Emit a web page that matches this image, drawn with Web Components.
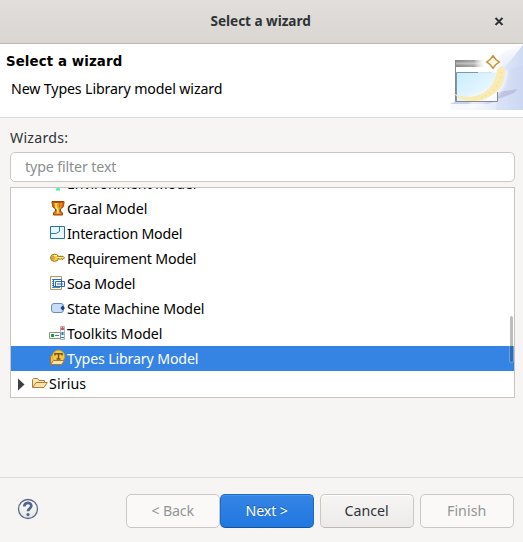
<!DOCTYPE html>
<html lang="en"><head><meta charset="utf-8"><title>Select a wizard</title>
<style>html,body{margin:0;height:100%;overflow:hidden;background:#f6f5f4;font:14.2px/25px "Noto Sans",sans-serif;color:#000}</style></head>
<body><wizard-dialog></wizard-dialog>
<script>
// One-line label whose tracking is adjusted to fill a given width.
class FitText extends HTMLElement{
  connectedCallback(){
    const r=this.attachShadow({mode:'open'});
    r.innerHTML='<style>:host{display:block;flex:none;white-space:pre;text-align:left}span{display:inline-block}</style><span></span>';
    const s=r.querySelector('span'),t=this.getAttribute('text'),w=+this.getAttribute('w');
    s.textContent=t;
    this.style.width=w+'px';
    s.style.letterSpacing=((w+.3-s.getBoundingClientRect().width)/t.length)+'px';
  }
}
class TitleBar extends HTMLElement{
  connectedCallback(){
    this.attachShadow({mode:'open'}).innerHTML=`<style>
    :host{display:grid;grid-template-columns:1fr auto 1fr;align-items:center;height:43px;background:linear-gradient(#e1dedb,#dad6d2);border-bottom:1px solid #bfb8b1;color:#2e3436;font-weight:700;font-size:13.6px}
    fit-text{grid-column:2;position:relative;left:-1px;top:-1px}svg{justify-self:end;margin-right:19px}</style>
    <fit-text text="Select a wizard" w="100"></fit-text>
    <svg width="10" height="10" viewBox="0 0 10 10"><path d="M1.500 2.200 8.500 9.200M8.500 2.200 1.500 9.200" stroke="#fff" stroke-width="2" opacity=".6"/><path d="M1.500 1 8.500 8M8.500 1 1.500 8" stroke="#2e3436" stroke-width="2.100"/></svg>`;
  }
}
class WizardBanner extends HTMLElement{
  connectedCallback(){
    this.attachShadow({mode:'open'}).innerHTML=`<style>
    :host{display:flex;justify-content:space-between;height:73px;background:#fff;border-bottom:1px solid #d9d9d8}
    .t{padding:5px 0 0 6px}.h{font:bold 13.33px/25px "DejaVu Sans",sans-serif}.s{padding:2px 0 0 5px}svg{flex:none}</style>
    <div class="t"><fit-text class="h" text="Select a wizard" w="116"></fit-text><fit-text class="s" text="New Types Library model wizard" w="211"></fit-text></div>
    <svg width="73" height="66" viewBox="0 0 73 66"><defs>
    <linearGradient id="a"><stop offset=".3" stop-color="#f6f8fe"/><stop offset="1" stop-color="#cfdaf3"/></linearGradient>
    <linearGradient id="b" y2="1" x2="0"><stop offset="0" stop-color="#fff" stop-opacity=".9"/><stop offset=".55" stop-color="#fff" stop-opacity="0"/></linearGradient>
    <linearGradient id="c" x2="1" y2="1"><stop stop-color="#c9ecff"/><stop offset="1" stop-color="#f4fcff"/></linearGradient>
    <linearGradient id="d"><stop stop-color="#858585"/><stop offset=".6" stop-color="#a5a5a5"/><stop offset="1" stop-color="#fff" stop-opacity="0"/></linearGradient>
    <linearGradient id="h" x2="0" y2="1"><stop stop-color="#fff" stop-opacity="0"/><stop offset=".5" stop-color="#fff" stop-opacity=".4"/><stop offset="1" stop-color="#fff" stop-opacity="0"/></linearGradient>
    <radialGradient id="g"><stop offset=".4" stop-color="#fff"/><stop offset="1" stop-color="#fff" stop-opacity="0"/></radialGradient>
    <filter id="f" x="-20%" y="-20%" width="140%" height="140%"><feGaussianBlur stdDeviation=".7"/></filter><filter id="f2" x="-20%" y="-20%" width="140%" height="140%"><feGaussianBlur stdDeviation="1.500"/></filter></defs>
    <path d="M73 1C62 3 50 9 43 18 35 29 20 50 0 59V66H73Z" fill="url(#a)"/><path d="M73 22C61 23 55 28 50 34L46 66H73Z" fill="#bfcff0" opacity=".25"/>
    <path d="M73 1H0V66H20Z" fill="url(#b)"/>
    <path d="M0 60 7 57H46L38 60ZM48 48 68 45 64 49 48 55Z" fill="#aaa8ce" opacity=".5" filter="url(#f)"/>
    <path d="M5.500 16.500H47.500V57.500H5.500Z" fill="#fff"/><path d="M6 28.500H47V57H6Z" fill="url(#c)"/>
    <path d="M5 16H37V23H5Z" fill="url(#d)"/><path d="M6 17H37V22H6Z" fill="url(#h)"/>
    <path d="M20 57Q50 55 53 26" fill="none" stroke="#fff" stroke-width="11" opacity=".6" filter="url(#f2)"/>
    <path d="M5.500 16V57.500H47.500V48" fill="none" stroke="#84898d"/><path d="M6.500 57V28.500H28" fill="none" stroke="#7f99a4"/><path d="M28 28.500H42" stroke="#7f99a4" opacity=".2"/>
    <circle cx="43" cy="18" r="11" fill="url(#g)"/>
    <path d="M3 49Q12 54 23 52.500Q44 48 47 26Q51 19 55 25.500Q56 48 32 56Q13 60 3 49Z" fill="#faebb5" filter="url(#f)"/>
    <path d="M51 28Q50 46 31 54" fill="none" stroke="#edd995" stroke-width="1.300" stroke-dasharray="1.300 3.500"/>
    <path d="M43 11.800 45.700 15.300 49.200 18 45.700 20.700 43 24.200 40.300 20.700 36.800 18 40.300 15.300Z" fill="#fff5e0" stroke="#bd953e" stroke-width="1.500"/></svg>`;
  }
}
const ICONS={
env:'<path d="M8 8V15M6 14.500H10" stroke="#42f590" stroke-width="2"/>',
graal:'<path d="M2 1.500H14V3L13 7 10.500 9V11L12.500 13V15H3.500V13L5.500 11V9L3 7 2 3Z" fill="#d9730f" stroke="#9b3f08"/><path d="M4 2.500H12L11 7.500 9 9.500V12L11 14H5L7 12V9.500L5 7.500Z" fill="#f49c1d"/><path d="M6 3V7.500L7.700 9.500V13" fill="none" stroke="#ffed78" stroke-width="1.600"/><path d="M10 3 9.500 7.500M3 2.500H13M5 14.500H11" stroke="#c55406"/>',
inter:'<path d="M.5 1.500H14.500V13.500H.5Z" fill="#e6f7fd" stroke="#2673a9"/><path d="M1 8.500H6L9.500 6.500V2" fill="none" stroke="#327caf"/>',
req:'<path d="M7.500 6.300H13L14.500 7.800 13 9.300H12L11 8.500 10 9.500 9 8.500 8 9.500H7Z" fill="#ffe56b" stroke="#8d6411"/><ellipse cx="4.500" cy="7.800" rx="4" ry="3.600" fill="#f6ce37" stroke="#a87312"/><circle cx="3" cy="7.800" r="1.200" fill="#fff" stroke="#91600f" stroke-width=".8"/><path d="M4 5.500H7M7 7.500H13" stroke="#fff19a"/>',
soa:'<path d="M.5 1.500H11.500V14.500H.5Z" fill="#f1f8fe" stroke="#b49a59"/><path d="M2 4.500H8M2 6.500H4M2 8.500H4M2 10.500H4M2 12.500H10" stroke="#4884be"/><path d="M3.500 4.500H11.500V11.500H3.500ZM5.500 6.500H14.500V11.500H5.500Z" fill="#eef7ff" stroke="#306aab"/><path d="M7 9H13" stroke="#306aab"/>',
state:'<rect x="1.500" y="3.500" width="12" height="9" rx="2.500" fill="#c5def5" stroke="#6590b9"/><path d="M12.500 5.500 15 8 12.500 10.500 10.500 8Z" fill="#163f87"/>',
tool:'<path d="M10.500 1.500H14.500V14.500H10.500Z" fill="#eef5fd" stroke="#a4b3cb"/><path d="M-.5 7.500H10.500V13.500H-.5Z" fill="#f8fbef" stroke="#85987d"/><path d="M1 10.500H4" stroke="#269355" stroke-width="3"/><path d="M5 10.500H9" stroke="#477aac"/><path d="M12.500 2V5M11 4H14" stroke="#e13f35" stroke-width="1.600"/><path d="M12.500 7V10" stroke="#2c72b5" stroke-width="2"/><path d="M11 12.500H14" stroke="#2c72b5"/>',
types:'<path d="M.5 13V6.500L2 5.500H6V13Z" fill="#efbc69" stroke="#b2752b"/><circle cx="8.500" cy="6.300" r="6.100" fill="#f8ca3c" stroke="#dca124" stroke-width=".8"/><path d="M5 5.500V3.700H12V5.500M8.500 4V9M6.500 9H10.500" fill="none" stroke="#76531b" stroke-width="1.500"/><path d="M3.500 10.500H14.500L11.500 14.500H.5Z" fill="#ffe5a6" stroke="#b2752b"/>',
folder:'<path d="M.5 12.500V4.500L1.500 3.500H5.500L7 5.500H12.500V7.500" fill="#ffe7b0" stroke="#b47a38"/><path d="M4 7.500H15.300L12 12.500H.7Z" fill="#ffe2aa" stroke="#b47a38"/>'};
class TreeItem extends HTMLElement{
  connectedCallback(){
    const root=this.hasAttribute('root'),i=this.getAttribute('icon');
    this.attachShadow({mode:'open'}).innerHTML=`<style>
    :host{display:flex;height:25px;align-items:center;padding-left:39px;flex:none}
    :host([root]){padding-left:7px}:host([selected]){background:#3584e4;color:#fff}svg{flex:none;overflow:visible;margin-top:-1px}fit-text{margin-left:1px}
    .e{margin-right:7px;margin-top:1px}</style>
    ${root?'<svg class="e" width="7" height="13"><path d="M0 .5 6.500 6.500 0 12.500Z" fill="#3c4143"/></svg>':''}
    <svg width="16" height="16" viewBox="0 0 16 16">${ICONS[i]}</svg><fit-text text="${this.getAttribute('label')}" w="${this.getAttribute('w')}"></fit-text>`;
  }
}
class TreeView extends HTMLElement{
  connectedCallback(){
    this.attachShadow({mode:'open'}).innerHTML=`<style>
    :host{display:block;box-sizing:border-box;height:211px;border:1px solid #c9c4bf;background:#fff;overflow:hidden;position:relative}
    .r{display:flex;flex-direction:column;margin-top:-17px}
    i{position:absolute;right:1px;top:128px;width:3px;height:46px;border-radius:2px;background:rgba(46,52,54,.32);outline:1px solid rgba(255,255,255,.25)}</style>
    <div class="r"><slot></slot></div><i></i>`;
  }
}
class FilterField extends HTMLElement{
  connectedCallback(){
    this.attachShadow({mode:'open'}).innerHTML=`<style>
    :host{display:flex;align-items:center;box-sizing:border-box;height:30px;border:1px solid #cdc7c2;border-radius:5px;background:#fff;padding:0 0 1px 14px;color:#8b8e8f}</style>
    <fit-text text="type filter text" w="91"></fit-text>`;
  }
}
class PushButton extends HTMLElement{
  connectedCallback(){
    this.attachShadow({mode:'open'}).innerHTML=`<style>
    :host{display:flex;box-sizing:border-box;width:94px;height:34px;align-items:center;justify-content:center;padding:0 1px 1px 0;border:1px solid #cdc7c2;border-bottom-color:#bfb8b1;border-radius:5px;background:linear-gradient(#f6f5f4,#edebe9);box-shadow:inset 0 1px #fff;color:#2e3436}
    :host([off]){background:#faf9f8;color:#929595;border-color:#cdc7c2;box-shadow:none}
    :host([go]){background:linear-gradient(#3584e4,#2078e0);border-color:#1b6acb;border-bottom-color:#15539e;box-shadow:inset 0 1px #4b93e8;color:#fff;text-shadow:0 -1px rgba(0,0,0,.35)}</style>
    <fit-text text="${this.getAttribute('label')}" w="${this.getAttribute('w')}"></fit-text>`;
  }
}
class WizardFooter extends HTMLElement{
  connectedCallback(){
    this.attachShadow({mode:'open'}).innerHTML=`<style>
    :host{display:flex;align-items:flex-start;box-sizing:border-box;height:65px;padding:16px 9px 0 17px;border-top:1px solid #dadad8}
    .q{margin:4px auto 0 0}.b{display:flex}.c{margin:0 6px}</style>
    <svg class="q" width="22" height="22" viewBox="0 0 22 22"><defs><linearGradient id="q" x2="0" y2="1"><stop stop-color="#fff"/><stop offset="1" stop-color="#e3e6e6"/></linearGradient></defs><circle cx="11" cy="11" r="9.500" fill="url(#q)" stroke="#5b6c8b" stroke-width="1.300"/><path d="M7.300 8.500C7.300 4 14.300 3.700 14.300 7.800 14.300 10.500 11 10.500 11 13.300" fill="none" stroke="#53658a" stroke-width="2.700"/><circle cx="11" cy="16.600" r="1.600" fill="#53658a"/></svg>
    <div class="b"><push-button off label="&lt; Back" w="42"></push-button><push-button go label="Next &gt;" w="42"></push-button><push-button class="c" label="Cancel" w="44"></push-button><push-button off label="Finish" w="39"></push-button></div>`;
  }
}
class WizardDialog extends HTMLElement{
  connectedCallback(){
    this.attachShadow({mode:'open'}).innerHTML=`<style>
    :host{display:flex;flex-direction:column;width:523px;height:542px}
    main{flex:1;padding:7px 8px 0 10px}.l{color:#2e3436;margin-bottom:2px}tree-view{margin-top:5px}</style>
    <title-bar></title-bar><wizard-banner></wizard-banner>
    <main><fit-text class="l" text="Wizards:" w="58"></fit-text><filter-field></filter-field>
    <tree-view><tree-item icon="env" label="Environment Model" w="129"></tree-item>
    <tree-item icon="graal" label="Graal Model" w="80"></tree-item>
    <tree-item icon="inter" label="Interaction Model" w="115"></tree-item>
    <tree-item icon="req" label="Requirement Model" w="129"></tree-item>
    <tree-item icon="soa" label="Soa Model" w="68"></tree-item>
    <tree-item icon="state" label="State Machine Model" w="137"></tree-item>
    <tree-item icon="tool" label="Toolkits Model" w="95"></tree-item>
    <tree-item selected icon="types" label="Types Library Model" w="131"></tree-item>
    <tree-item root icon="folder" label="Sirius" w="37"></tree-item></tree-view></main>
    <wizard-footer></wizard-footer>`;
  }
}
customElements.define('fit-text',FitText);
customElements.define('title-bar',TitleBar);
customElements.define('wizard-banner',WizardBanner);
customElements.define('tree-item',TreeItem);
customElements.define('tree-view',TreeView);
customElements.define('filter-field',FilterField);
customElements.define('push-button',PushButton);
customElements.define('wizard-footer',WizardFooter);
customElements.define('wizard-dialog',WizardDialog);
</script></body></html>
